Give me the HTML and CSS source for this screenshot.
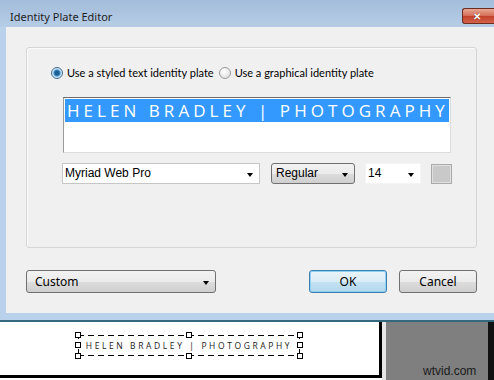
FILE: index.html
```html
<!DOCTYPE html>
<html lang="en">

<head>
    <meta charset="UTF-8" />
    <title>Identity Plate Editor</title>
    <link rel="stylesheet" href="styles.css">
</head>

<body>
    <div class="window">
        <header class="titlebar">
            <span class="title">Identity Plate Editor</span>
            <span class="close">&#x2715;</span>
        </header>
        <div class="client">
            <section class="group">
                <div class="radios">
                    <label class="radio"><span class="dot checked"></span>Use a styled text identity plate</label>
                    <label class="radio"><span class="dot"></span>Use a graphical identity plate</label>
                </div>
                <div class="plate-box">
                    <div class="plate-sel">HELEN BRADLEY | PHOTOGRAPHY</div>
                </div>
                <div class="font-row">
                    <div class="combo font-name">Myriad Web Pro<span class="arrow"></span></div>
                    <div class="combo btn-combo font-style">Regular<span class="arrow"></span></div>
                    <div class="combo font-size">14<span class="arrow"></span></div>
                    <div class="swatch"></div>
                </div>
            </section>
            <div class="footer">
                <div class="combo btn-combo preset">Custom<span class="arrow"></span></div>
                <button class="btn btn-default">OK</button>
                <button class="btn">Cancel</button>
            </div>
        </div>
    </div>

    <div class="lower">
        <div class="canvas">
            <div class="plate-preview">
                HELEN BRADLEY | PHOTOGRAPHY
                <span class="handle h-tl"></span>
                <span class="handle h-tm"></span>
                <span class="handle h-tr"></span>
                <span class="handle h-ml"></span>
                <span class="handle h-mr"></span>
                <span class="handle h-bl"></span>
                <span class="handle h-bm"></span>
                <span class="handle h-br"></span>
            </div>
        </div>
        <div class="gap"></div>
        <div class="side">wtvid.com</div>
        <div class="edge"></div>
    </div>
</body>

</html>
```

FILE: styles.css
```css
* {
    margin: 0px;
    padding: 0px;
    box-sizing: border-box;
}

body {
    width: 494px;
    height: 380px;
    overflow: hidden;
    background: #ffffff;
    font-family: "Lato", "Noto Sans", sans-serif;
    font-size: 12px;
    color: #000;
}

.window {
    height: 322px;
    background: #b9d1ea;
    border-bottom: 2px solid #34687f;
}

.titlebar {
    height: 27px;
    display: flex;
    align-items: flex-start;
    justify-content: space-between;
    background: linear-gradient(#a3bcd9, #b6cde7);
}

.title {
    margin: 10px 0 0 10px;
    font-family: "Noto Sans", sans-serif;
    font-size: 11px;
    line-height: 14px;
    color: #1e1e1e;
}

.close {
    margin-top: 8px;
    width: 32px;
    height: 16px;
    border: 1px solid #6e2b1f;
    border-right: none;
    border-radius: 3px 0 0 3px;
    background: linear-gradient(#e8a893, #d46b55 50%, #c3412b 51%, #d2634a);
    color: #fff;
    font-size: 10px;
    font-weight: bold;
    line-height: 14px;
    padding-left: 10px;
    text-shadow: 0 0 1px #5a1a10;
}

.client {
    margin-left: 6px;
    height: 286px;
    background: #f0f0f0;
    padding: 20px 17px 0 20px;
}

.group {
    height: 201px;
    border: 1px solid #d5d5d5;
    border-radius: 3px;
    box-shadow: inset 1px 1px #fbfbfb;
    padding: 19px 0 0 24px;
}

.radios {
    display: flex;
    gap: 5px;
    height: 12px;
    font-size: 11px;
}

.radio {
    display: flex;
    align-items: center;
    gap: 4px;
    line-height: 12px;
}

.dot {
    width: 12px;
    height: 12px;
    border-radius: 50%;
    border: 1px solid #9a9a9a;
    background: radial-gradient(circle at 40% 35%, #ffffff, #d8d8d8);
}

.dot.checked {
    border-color: #3f6b8c;
    background: radial-gradient(circle, #1d5f93 0 2px, #3d8fce 3px, #b7d9f2 4px, #ffffff 6px);
}

.plate-box {
    margin: 18px 0 0 12px;
    width: 388px;
    height: 56px;
    background: #fff;
    border: 1px solid;
    border-color: #6c6c6c #dcdcdc #dcdcdc #9a9a9a;
    padding: 1px;
}

.plate-sel {
    height: 23px;
    background: #3399ff;
    color: #fff;
    font-family: "Open Sans", sans-serif;
    font-size: 17px;
    line-height: 23px;
    letter-spacing: 4.05px;
    padding-left: 2px;
    white-space: nowrap;
    overflow: hidden;
}

.font-row {
    margin: 10px 0 0 11px;
    display: flex;
    align-items: center;
    height: 21px;
}

.combo {
    position: relative;
    height: 21px;
    background: #fff;
    border: 1px solid #c6c6c6;
    font-family: "Liberation Sans", sans-serif;
    font-size: 12px;
    line-height: 19px;
    padding-left: 2px;
}

.arrow {
    position: absolute;
    right: 6px;
    top: 9px;
    border-left: 3px solid transparent;
    border-right: 3px solid transparent;
    border-top: 4px solid #000;
}

.font-name {
    width: 198px;
}

.btn-combo {
    border: 1px solid #707070;
    border-radius: 3px;
    background: linear-gradient(#f2f2f2, #ebebeb 50%, #dddddd 51%, #cfcfcf);
    padding-left: 4px;
}

.font-style {
    width: 84px;
    margin-left: 11px;
}

.font-size {
    width: 56px;
    margin-left: 10px;
    border-color: #f4f4f4;
}

.swatch {
    width: 21px;
    height: 20px;
    margin-left: 10px;
    background: #c9c9c9;
    border: 1px solid #a9a9a9;
    box-shadow: inset 0 0 0 1px #e0e0e0;
}

.footer {
    margin-top: 22px;
    display: flex;
    height: 23px;
}

.preset {
    width: 190px;
    height: 23px;
    line-height: 21px;
    font-family: "Noto Sans", sans-serif;
    padding-left: 8px;
}

.preset .arrow {
    top: 10px;
}

.btn {
    width: 78px;
    height: 23px;
    border: 1px solid #707070;
    border-radius: 3px;
    background: linear-gradient(#f2f2f2, #ebebeb 50%, #dddddd 51%, #cfcfcf);
    font-family: "Noto Sans", sans-serif;
    font-size: 12px;
    color: #000;
}

.btn-default {
    margin-left: auto;
    margin-right: 12px;
    border-color: #3c7fb1;
    background: linear-gradient(#e9f3f9, #dbecf6 50%, #c4e2f3 51%, #b4d8ee);
    box-shadow: inset 0 0 0 1px #8ed0f0;
}

.lower {
    height: 58px;
    display: flex;
}

.canvas {
    width: 382px;
    height: 56px;
    background: #fff;
    border-right: 3px solid #000;
    border-bottom: 3px solid #000;
    padding: 13px 0 0 78px;
}

.plate-preview {
    position: relative;
    width: 222px;
    height: 21px;
    background:
        repeating-linear-gradient(90deg, #000 0 6px, transparent 6px 10px) top / 100% 1px no-repeat,
        repeating-linear-gradient(90deg, #000 0 6px, transparent 6px 10px) bottom / 100% 1px no-repeat,
        repeating-linear-gradient(#000 0 4px, transparent 4px 7px) left / 1px 100% no-repeat,
        repeating-linear-gradient(#000 0 4px, transparent 4px 7px) right / 1px 100% no-repeat;
    font-family: "Open Sans", sans-serif;
    font-size: 8.5px;
    line-height: 21px;
    letter-spacing: 2.6px;
    color: #1a1a1a;
    text-align: center;
    white-space: nowrap;
}

.handle {
    position: absolute;
    width: 6px;
    height: 6px;
    background: #fff;
    border: 1px solid #000;
}

.h-tl { left: -3px; top: -3px; }
.h-tm { left: 108px; top: -3px; }
.h-tr { right: -3px; top: -3px; }
.h-ml { left: -3px; top: 7px; }
.h-mr { right: -3px; top: 7px; }
.h-bl { left: -3px; bottom: -3px; }
.h-bm { left: 108px; bottom: -3px; }
.h-br { right: -3px; bottom: -3px; }

.gap {
    width: 4px;
    background: #e6e6e6;
}

.side {
    width: 102px;
    background: #7f7f7f;
    font-family: "Liberation Sans", sans-serif;
    font-size: 12px;
    color: #1a1a1a;
    padding: 42px 0 0 37px;
}

.edge {
    flex: 1;
    background: #111;
}
```
